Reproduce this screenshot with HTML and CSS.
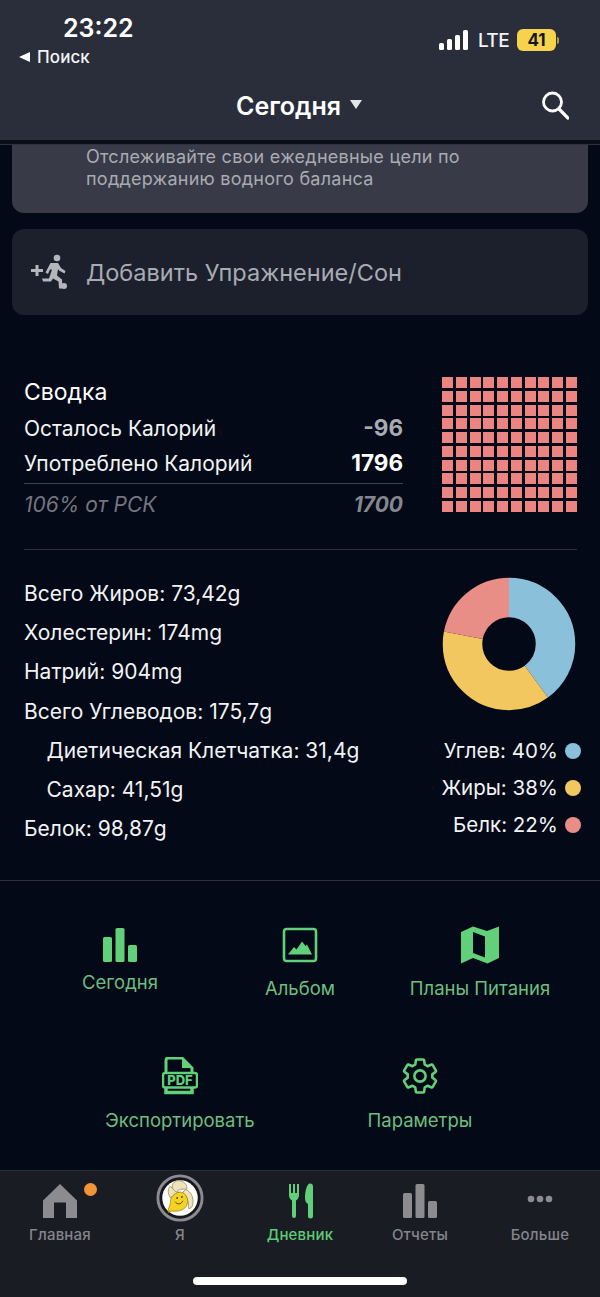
FILE: index.html
```html
<!DOCTYPE html>
<html lang="ru">
<head>
<meta charset="utf-8">
<title>Сегодня</title>
<link rel="stylesheet" href="styles.css">
</head>
<body>
<div class="phone">
  <header class="header">
    <div class="status">
      <div class="status-left">
        <div class="clock">23:22</div>
        <div class="back"><span class="back-arrow"></span>Поиск</div>
      </div>
      <div class="status-right">
        <svg class="signal" width="30" height="20" viewBox="0 0 30 20"><rect x="0" y="13" width="5" height="7" rx="1.5"/><rect x="8" y="9" width="5" height="11" rx="1.5"/><rect x="16" y="5" width="5" height="15" rx="1.5"/><rect x="24" y="0" width="5" height="20" rx="1.5"/></svg>
        <span class="lte">LTE</span>
        <span class="battery">41</span><span class="battery-tip"></span>
      </div>
    </div>
    <div class="nav">
      <div class="nav-title">Сегодня<span class="caret"></span></div>
      <svg class="search" width="28" height="30" viewBox="0 0 28 30"><circle cx="11.5" cy="12" r="9" fill="none" stroke="#fff" stroke-width="2.8"/><path d="M18 19l9 9" stroke="#fff" stroke-width="3.2" stroke-linecap="round"/></svg>
    </div>
  </header>
  <div class="header-edge"></div>

  <main class="content">
    <section class="card card-water">
      <p>Отслеживайте свои ежедневные цели по<br>поддержанию водного баланса</p>
    </section>
    <section class="card card-add">
      <svg class="run-icon" width="40" height="36" viewBox="0 0 40 36"><path d="M1 16.500h12M7 11v11" stroke="#b4b6bc" stroke-width="3" fill="none"/><circle cx="27" cy="4" r="3.300" fill="#b4b6bc"/><path d="M20.500 9H28l3 5 4.500 3-1 2.500-5.500-3-1-1.500-1 6.500 5 4 .5 9h-3.500l-.5-7-5.500-3-2 3H13l-1-3h7l3-9h-2l-2 4.500-2.500-1.500z" fill="#b4b6bc"/><circle cx="34" cy="32" r="3" fill="#b4b6bc"/></svg>
      <span>Добавить Упражнение/Сон</span>
    </section>

    <section class="summary">
      <div class="summary-table">
        <h2>Сводка</h2>
        <div class="row"><span>Осталось Калорий</span><b class="muted">-96</b></div>
        <div class="row"><span>Употреблено Калорий</span><b>1796</b></div>
        <div class="row row-total"><i>106% от РСК</i><b><i>1700</i></b></div>
      </div>
      <div class="waffle">
        <i></i><i></i><i></i><i></i><i></i><i></i><i></i><i></i><i></i><i></i>
        <i></i><i></i><i></i><i></i><i></i><i></i><i></i><i></i><i></i><i></i>
        <i></i><i></i><i></i><i></i><i></i><i></i><i></i><i></i><i></i><i></i>
        <i></i><i></i><i></i><i></i><i></i><i></i><i></i><i></i><i></i><i></i>
        <i></i><i></i><i></i><i></i><i></i><i></i><i></i><i></i><i></i><i></i>
        <i></i><i></i><i></i><i></i><i></i><i></i><i></i><i></i><i></i><i></i>
        <i></i><i></i><i></i><i></i><i></i><i></i><i></i><i></i><i></i><i></i>
        <i></i><i></i><i></i><i></i><i></i><i></i><i></i><i></i><i></i><i></i>
        <i></i><i></i><i></i><i></i><i></i><i></i><i></i><i></i><i></i><i></i>
        <i></i><i></i><i></i><i></i><i></i><i></i><i></i><i></i><i></i><i></i>
      </div>
    </section>

    <section class="nutrition">
      <ul class="nutrients">
        <li>Всего Жиров: 73,42g</li>
        <li>Холестерин: 174mg</li>
        <li>Натрий: 904mg</li>
        <li>Всего Углеводов: 175,7g</li>
        <li class="sub">Диетическая Клетчатка: 31,4g</li>
        <li class="sub">Сахар: 41,51g</li>
        <li>Белок: 98,87g</li>
      </ul>
      <div class="macros">
        <svg class="donut" width="134" height="134" viewBox="0 0 134 134">
          <g fill="none" stroke-width="39.500" transform="rotate(-90 67 67)">
            <circle cx="67" cy="67" r="46.500" pathLength="100" stroke="#8bc0da" stroke-dasharray="40 60"/>
            <circle cx="67" cy="67" r="46.500" pathLength="100" stroke="#f3c75f" stroke-dasharray="38 62" stroke-dashoffset="-40"/>
            <circle cx="67" cy="67" r="46.500" pathLength="100" stroke="#e98e87" stroke-dasharray="22 78" stroke-dashoffset="-78"/>
          </g>
        </svg>
        <div class="legend"><span>Углев: 40%</span><i class="dot dot-blue"></i></div>
        <div class="legend"><span>Жиры: 38%</span><i class="dot dot-yellow"></i></div>
        <div class="legend"><span>Белк: 22%</span><i class="dot dot-red"></i></div>
      </div>
    </section>

    <section class="actions">
      <div class="action-row">
        <div class="action action-short">
          <svg width="36" height="36" viewBox="0 0 36 36"><rect x="1" y="10" width="9" height="25" rx="1.500"/><rect x="13.500" y="1" width="9" height="34" rx="1.500"/><rect x="26" y="18" width="9" height="17" rx="1.500"/></svg>
          <span>Сегодня</span>
        </div>
        <div class="action">
          <svg width="36" height="36" viewBox="0 0 36 36"><rect x="2" y="2" width="32" height="32" rx="2.500" fill="none" stroke="#62d07a" stroke-width="2.600"/><path d="M6 27.500l6-7.500 2.500 2.500 5.500-8 3.500 4.500 1.500-1.500 5 10z"/></svg>
          <span>Альбом</span>
        </div>
        <div class="action">
          <svg width="40" height="38" viewBox="0 0 40 38"><path d="M1 6l12-5.500L27 5 39 .5V32l-11.500 5.500L13 32 1 37.500zM13 6v21l12 4.500V10.500z" fill-rule="evenodd"/></svg>
          <span>Планы Питания</span>
        </div>
      </div>
      <div class="action-row action-row-two">
        <div class="action">
          <svg width="36" height="38" viewBox="0 0 36 38"><path d="M4 17V3.500A2.500 2.500 0 0 1 6.500 1H20l10 10v6" fill="none" stroke="#62d07a" stroke-width="3"/><path d="M20 1v10h10z"/><path d="M4 30v5.500h26V30" fill="none" stroke="#62d07a" stroke-width="3.500"/><rect x="1" y="16" width="34" height="14.500" rx="2" fill="none" stroke="#62d07a" stroke-width="2.500"/><text class="pdf" x="18" y="28.300" text-anchor="middle">PDF</text></svg>
          <span>Экспортировать</span>
        </div>
        <div class="action">
          <svg width="36" height="36" viewBox="1.500 1.500 21 21"><path fill="none" stroke="#62d07a" stroke-width="1.500" stroke-linejoin="round" d="M19.140 12.940c.04-.3.06-.61.06-.94 0-.32-.02-.64-.07-.94l2.030-1.580c.18-.14.23-.41.12-.61l-1.920-3.320c-.12-.22-.37-.29-.59-.22l-2.390.96c-.5-.38-1.030-.7-1.620-.94l-.36-2.540c-.04-.24-.24-.41-.48-.41h-3.840c-.24 0-.43.17-.47.41l-.36 2.540c-.59.24-1.130.57-1.620.94l-2.390-.96c-.22-.08-.47 0-.59.22L2.740 8.870c-.12.21-.08.47.12.61l2.030 1.580c-.05.3-.09.63-.09.94s.02.64.07.94l-2.030 1.580c-.18.14-.23.41-.12.61l1.920 3.320c.12.22.37.29.59.22l2.390-.96c.5.38 1.030.7 1.620.94l.36 2.540c.05.24.24.41.48.41h3.840c.24 0 .44-.17.47-.41l.36-2.540c.59-.24 1.130-.56 1.620-.94l2.390.96c.22.08.47 0 .59-.22l1.920-3.320c.12-.22.07-.47-.12-.61l-2.010-1.580z"/><circle cx="12" cy="12" r="3.300" fill="none" stroke="#62d07a" stroke-width="1.500"/></svg>
          <span>Параметры</span>
        </div>
      </div>
    </section>
  </main>

  <nav class="tabbar">
    <div class="tab">
      <span class="badge"></span>
      <svg width="36" height="36" viewBox="0 0 36 36"><path d="M18 1L35 17.500V35H24V19.500H12V35H1V17.500z" fill="#8b8b90"/></svg>
      <span>Главная</span>
    </div>
    <div class="tab">
      <svg class="avatar" width="48" height="48" viewBox="0 0 50 50">
        <circle cx="25" cy="25" r="23" fill="#16181e" stroke="#8b8b90" stroke-width="3"/>
        <circle cx="25" cy="25" r="18.500" fill="#fff"/>
        <path d="M15 25c-3-5-3-10 0-12 2 2 5 4 8 6z" fill="#efe3bd" stroke="#8c7a4b" stroke-width=".7"/>
        <path d="M17 15c-1-5 3-9 8-8 5 1 8 5 7 9-4-1-9 0-11 3z" fill="#efe3bd" stroke="#8c7a4b" stroke-width=".7"/>
        <path d="M31 16c6 3 9 9 7 17-1 2-2 3-4 3 0-7-1-13-7-16z" fill="#efe3bd" stroke="#8c7a4b" stroke-width=".7"/>
        <path d="M24 19c-5 1-9 5-9 10 0 3-1 5-2 7l-.5 4 4-1.500c7 1 14-1 16-7 2-7-3-14-9-12.500z" fill="#f4d21f" stroke="#8a7415" stroke-width=".7"/>
        <path d="M20 29c2 3 6 3 8-1" fill="none" stroke="#5c4b0a" stroke-width="1"/>
        <circle cx="22" cy="25" r="1" fill="#5c4b0a"/><circle cx="27" cy="24" r="1" fill="#5c4b0a"/>
      </svg>
      <span>Я</span>
    </div>
    <div class="tab tab-active">
      <svg width="36" height="36" viewBox="0 0 36 36"><path d="M7 1h2v9h2V1h2v9h2V1h2v11c0 3-1.500 4.500-3 5.500V33a2 2 0 0 1-4 0V17.500C8.500 16.500 7 15 7 12z" fill="#62d07a"/><path d="M28 .5c2 0 3 1 3 3V33a2.500 2.500 0 0 1-5 0V21c-2-1-3-3-3-6C23 8 25 .5 28 .5z" fill="#62d07a"/></svg>
      <span>Дневник</span>
    </div>
    <div class="tab">
      <svg width="36" height="36" viewBox="0 0 36 36"><rect x="1" y="10" width="9" height="25" rx="1.500" fill="#8b8b90"/><rect x="13.500" y="1" width="9" height="34" rx="1.500" fill="#8b8b90"/><rect x="26" y="18" width="9" height="17" rx="1.500" fill="#8b8b90"/></svg>
      <span>Отчеты</span>
    </div>
    <div class="tab">
      <svg width="36" height="36" viewBox="0 0 36 36"><circle cx="9" cy="16" r="3.300" fill="#8b8b90"/><circle cx="18" cy="16" r="3.300" fill="#8b8b90"/><circle cx="27" cy="16" r="3.300" fill="#8b8b90"/></svg>
      <span>Больше</span>
    </div>
    <div class="home-indicator"></div>
  </nav>
</div>
</body>
</html>
```

FILE: styles.css
```css
* { box-sizing: border-box; }
html, body { margin: 0; padding: 0; }
body { background: #030916; font-family: Inter, "Liberation Sans", sans-serif; color: #f2f3f5; }
.phone { width: 600px; height: 1297px; overflow: hidden; display: flex; flex-direction: column; position: relative; }

.header { height: 140px; background: #2a2e3b; flex: none; padding-top: 14px; }
.header-edge { height: 5px; flex: none; background: #0b0e18; border-bottom: 1px solid #2e3240; }
.status { display: flex; justify-content: space-between; height: 58px; }
.status-left { padding-left: 19px; }
.clock { font-size: 25px; font-weight: 600; line-height: 28px; margin-left: 44px; color: #fff; }
.back { display: flex; align-items: center; font-size: 17px; line-height: 26px; margin-top: 2px; font-weight: 500; color: #f4f4f6; letter-spacing: .1px; }
.back-arrow { width: 0; height: 0; border-style: solid; border-width: 5.5px 11px 5.5px 0; border-color: transparent #fff transparent transparent; margin-right: 7px; }
.status-right { display: flex; align-items: center; height: 26px; margin-top: 13px; padding-right: 41px; }
.signal { fill: #fff; margin-right: 9px; }
.lte { font-size: 19px; font-weight: 500; color: #f2f3f5; margin-right: 9px; letter-spacing: -.6px; width: 30px; }
.battery { width: 39px; height: 22px; border-radius: 6px; background: #f6d34c; color: #15161b; font-size: 17px; font-weight: 700; text-align: center; line-height: 22px; }
.battery-tip { width: 2px; height: 7px; background: #b59c3a; border-radius: 0 2px 2px 0; margin-left: 1px; }
.nav { height: 68px; display: flex; align-items: center; justify-content: center; position: relative; }
.nav-title { font-size: 25px; font-weight: 600; color: #fff; display: flex; align-items: center; margin-left: -2px; }
.caret { width: 0; height: 0; border-style: solid; border-width: 9px 6px 0 6px; border-color: #e4e5e8 transparent transparent; margin-left: 9px; margin-top: -4px; }
.search { position: absolute; right: 31px; top: 18px; }

.content { flex: 1; min-height: 0; }
.card { margin: 0 12px; border-radius: 12px; }
.card-water { height: 68px; background: #383b47; border-radius: 0 0 12px 12px; padding: 1px 0 0 74px; }
.card-water p { margin: 0; font-size: 18px; line-height: 22px; color: #a9abb2; letter-spacing: .25px; white-space: nowrap; }
.card-add { height: 86px; margin-top: 16px; background: #1c202d; display: flex; align-items: center; padding-left: 18px; }
.card-add span { margin-left: 16px; font-size: 23.500px; color: #a9abb2; }

.summary { display: flex; justify-content: space-between; margin: 61px 23px 0 24px; align-items: flex-start; }
.summary-table { width: 379px; }
.summary h2 { margin: 0 0 2px; font-size: 23px; font-weight: 400; line-height: 32px; color: #fff; }
.row { display: flex; justify-content: space-between; align-items: baseline; font-size: 21px; line-height: 35px; height: 35px; }
.row b { font-weight: 700; font-size: 22.500px; color: #fff; }
.row b.muted { color: #a9abb2; }
.row-total { border-top: 1px solid #3c414f; margin-top: 3px; color: #74767f; line-height: 42px; height: 43px; }
.row-total b { color: #85878f; font-size: 21px; }
.waffle { width: 135px; height: 135px; display: grid; grid-template-columns: repeat(10, 1fr); grid-template-rows: repeat(10, 1fr); gap: 2.700px; margin-top: 1px; }
.waffle i { background: #ec8581; display: block; }

.nutrition { display: flex; justify-content: space-between; margin: 23px 0 0 24px; padding-top: 24px; border-top: 1px solid #2e3240; width: 553px; height: 331px; position: relative; }
.nutrients { list-style: none; margin: 0; padding: 0; font-size: 21px; line-height: 39.200px; white-space: nowrap; }
.nutrients .sub { padding-left: 22.500px; }
.macros { width: 140px; display: flex; flex-direction: column; align-items: flex-end; margin-right: -4px; }
.donut { display: block; margin: 3px 5px 0 0; }
.legend { display: flex; align-items: center; font-size: 20.500px; line-height: 37px; color: #f2f3f5; white-space: nowrap; }
.donut + .legend { margin-top: 21px; }
.dot { width: 16px; height: 16px; border-radius: 50%; margin-left: 7px; display: block; }
.dot-blue { background: #8bc0da; }
.dot-yellow { background: #f3c75f; }
.dot-red { background: #e98e87; }

.actions { border-top: 1px solid #2e3240; padding-top: 45px; }
.action-row { display: flex; justify-content: center; height: 130px; }
.action { width: 180px; display: flex; flex-direction: column; align-items: center; color: #6cbf81; font-size: 18.500px; fill: #62d07a; }
.action svg { display: block; height: 38px; }
.action span { margin-top: 12px; line-height: 24px; }
.action-short span { margin-top: 6px; }
.action-row-two { padding-top: 1px; }
.action-row-two .action { width: 240px; }
.action-row-two .action span { margin-top: 13px; }
.pdf { font: 800 13px Inter, sans-serif; fill: #62d07a; }

.tabbar { height: 127px; flex: none; background: #1a1c23; border-top: 1px solid #2a2d36; display: flex; position: relative; padding-top: 12px; }
.tab { width: 120px; display: flex; flex-direction: column; align-items: center; color: #83858b; font-size: 15px; font-weight: 500; position: relative; letter-spacing: .2px; height: 68px; }
.tab svg { display: block; height: 36px; flex: none; }
.tab > span:last-child { margin-top: 5px; line-height: 22px; }
.tab .avatar { height: 48px; width: 48px; margin-top: -9px; }
.tab .avatar + span { margin-top: 2px; }
.tab-active { color: #5fcb78; }
.badge { position: absolute; width: 13px; height: 13px; border-radius: 50%; background: #f0953a; left: 84px; top: 0; }
.home-indicator { position: absolute; left: 193px; top: 106px; width: 214px; height: 8px; background: #fff; border-radius: 4px; }
```
